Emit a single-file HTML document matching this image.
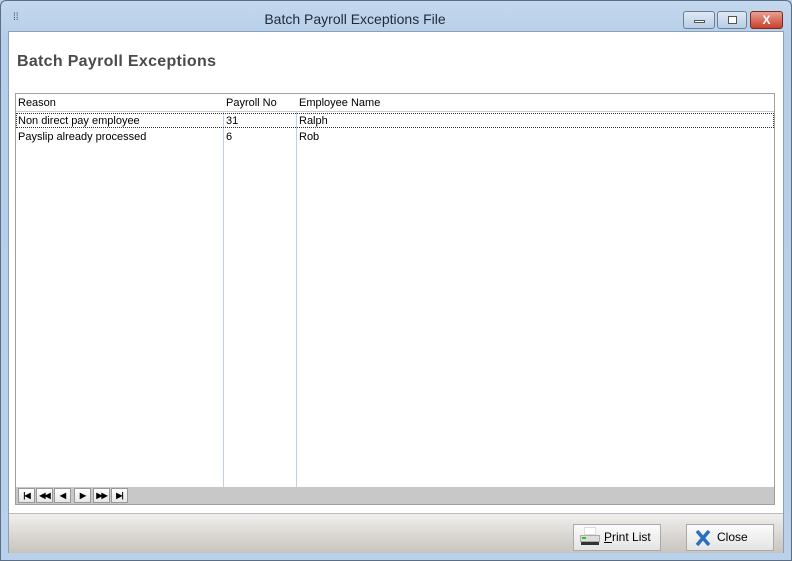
<!DOCTYPE html>
<html><head><meta charset="utf-8"><style>
*{margin:0;padding:0;box-sizing:border-box}
body{width:792px;height:561px;overflow:hidden;background:#b9d1ea;font-family:"Liberation Sans",sans-serif;position:relative}
.win{position:absolute;left:0;top:0;width:792px;height:561px;background:linear-gradient(#c4d8ee,#b5cde8 40px,#b9d1ea);border:1px solid #5a6e86;border-radius:6px 6px 0 0}
.title{position:absolute;left:0;top:10px;width:708px;text-align:center;font-size:14px;color:#1e2a3a}
.client{position:absolute;left:8px;top:31px;width:776px;height:522px;background:#fff;border:1px solid #8aa0b8}
h1{position:absolute;left:8px;top:21px;font-size:16px;font-weight:bold;color:#4a4a4a;letter-spacing:0.3px}
.grid{position:absolute;left:6px;top:61px;width:760px;height:412px;border:1px solid #a0a0a0;background:#fff}
.t{position:absolute;font-size:11px;color:#000;white-space:nowrap}
.vl{position:absolute;top:0;width:1px;height:393px;background:#c0d0e0}
.nav{position:absolute;left:0;top:393px;width:758px;height:17px;background:#c8c8c8}
.nb{position:absolute;top:1px;width:17px;height:15px;background:linear-gradient(#fff,#e6e6e6);border:1px solid #999;font-size:8px;text-align:center;line-height:13px;color:#000;font-weight:bold;letter-spacing:-1px}
.foot{position:absolute;left:0;top:481px;width:774px;height:40px;background:linear-gradient(#f0efed,#c9c4be);border-top:1px solid #bbb}
.btn{position:absolute;top:10px;height:27px;background:linear-gradient(#fbfbfb,#e4e4e4);border:1px solid #aaa;font-size:12px;line-height:25px}
.wb{position:absolute;top:10px;height:18px;border:1px solid #6b7f96;border-radius:3px;background:linear-gradient(#dfe9f5,#b8cde4)}
</style></head><body>
<div class="win">
 <div style="position:absolute;left:12px;top:11px;font-size:10px;color:#345">⁞⁞</div>
 <div class="title">Batch Payroll Exceptions File</div>
 <div class="wb" style="left:682px;width:32px"><div style="position:absolute;left:10px;top:8px;width:11px;height:3px;background:#fff;border:1px solid #555"></div></div>
 <div class="wb" style="left:716px;width:30px"><div style="position:absolute;left:10px;top:4px;width:9px;height:8px;border:1px solid #555;background:#fff"></div></div>
 <div class="wb" style="left:749px;width:33px;background:linear-gradient(#e8a090,#c8402c);border-color:#7a2a20;color:#fff;font-weight:bold;font-size:12px;text-align:center;line-height:16px">X</div>
</div>
<div class="client">
 <h1>Batch Payroll Exceptions</h1>
 <div class="grid">
  <div style="position:absolute;left:0;top:0;width:758px;height:18px;border-bottom:1px solid #ccc"></div>
  <div class="t" style="left:2px;top:3px">Reason</div>
  <div class="t" style="left:210px;top:3px">Payroll No</div>
  <div class="t" style="left:283px;top:3px">Employee Name</div>
  <div class="vl" style="left:207px;top:18px;height:375px"></div>
  <div class="vl" style="left:280px;top:18px;height:375px"></div>
  <div style="position:absolute;left:0;top:19px;width:758px;height:15px;border:1px dotted #333"></div>
  <div class="t" style="left:2px;top:21px">Non direct pay employee</div>
  <div class="t" style="left:210px;top:21px">31</div>
  <div class="t" style="left:283px;top:21px">Ralph</div>
  <div class="t" style="left:2px;top:37px">Payslip already processed</div>
  <div class="t" style="left:210px;top:37px">6</div>
  <div class="t" style="left:283px;top:37px">Rob</div>
  <div class="nav">
   <div class="nb" style="left:2px">|◀</div>
   <div class="nb" style="left:20px">◀◀</div>
   <div class="nb" style="left:38px">◀</div>
   <div class="nb" style="left:58px">▶</div>
   <div class="nb" style="left:77px">▶▶</div>
   <div class="nb" style="left:95px">▶|</div>
  </div>
 </div>
 <div class="foot">
  <div class="btn" style="left:564px;width:88px">
   <div style="position:absolute;left:6px;top:2px;width:20px;height:22px">
    <div style="position:absolute;left:4px;top:0;width:12px;height:8px;background:#fff;border:1px solid #ddd"></div>
    <div style="position:absolute;left:0;top:8px;width:20px;height:7px;background:#ddd;border:1px solid #aaa"></div>
    <div style="position:absolute;left:2px;top:10px;width:4px;height:2px;background:#2c2"></div>
    <div style="position:absolute;left:1px;top:15px;width:18px;height:3px;background:#333"></div>
   </div>
   <span style="position:absolute;left:30px;top:0"><u>P</u>rint List</span>
  </div>
  <div class="btn" style="left:677px;width:88px">
   <svg style="position:absolute;left:8px;top:5px" width="16" height="16" viewBox="0 0 16 16"><path d="M2 1 L14 15 M14 1 L2 15" stroke="#2a6fc0" stroke-width="3.5"/></svg>
   <span style="position:absolute;left:30px;top:0">Close</span>
  </div>
 </div>
</div>
</body></html>
